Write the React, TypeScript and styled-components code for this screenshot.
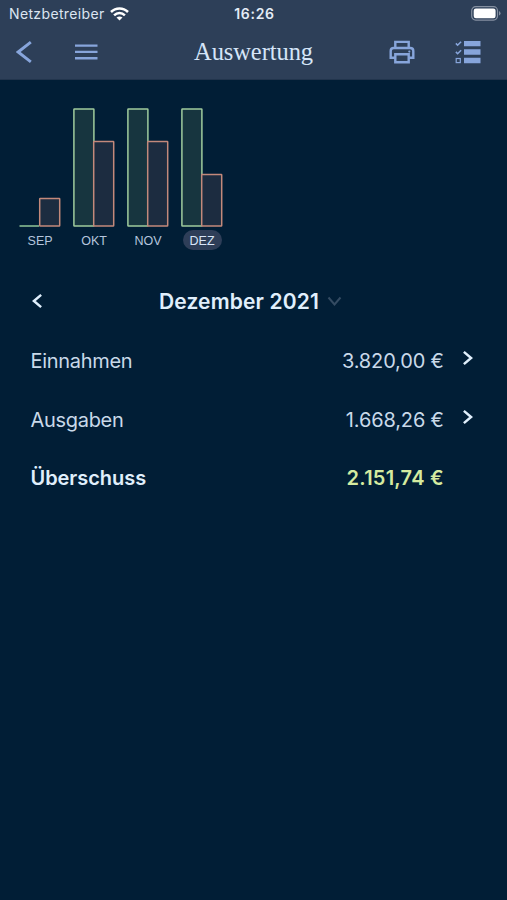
import React from "react";
import styled, { createGlobalStyle } from "styled-components";

const GlobalStyle = createGlobalStyle`
  * { box-sizing: border-box; }
  body { margin: 0; background: #011e36; }
`;

const Screen = styled.div`
  width: 507px;
  height: 900px;
  display: flex;
  flex-direction: column;
  overflow: hidden;
  background: #011e36;
  color: #d9e8f8;
  font-family: Inter, "Liberation Sans", sans-serif;
`;

const Header = styled.header`
  height: 80px;
  background: #2d3f58;
  border-bottom: 1px solid #22354d;
`;

const StatusBar = styled.div`
  height: 27px;
  display: grid;
  grid-template-columns: 1fr auto 1fr;
  align-items: center;
  padding: 0 7px 0 9px;
`;

const Carrier = styled.div`
  display: flex;
  align-items: center;
  gap: 5px;
  font-size: 14px;
  letter-spacing: 0.36px;
  color: #dce5f1;
  white-space: nowrap;
`;

const Clock = styled.div`
  font-size: 14px;
  font-weight: 600;
  letter-spacing: 0.7px;
  color: #e4ecf6;
`;

const Battery = styled.div`
  justify-self: end;
  display: flex;
  margin-right: -2px;
`;

const Toolbar = styled.div`
  height: 50px;
  display: grid;
  grid-template-columns: 1fr auto 1fr;
  align-items: center;
  color: #87a5db;
`;

const Tools = styled.div<{ $end?: boolean }>`
  display: flex;
  align-items: center;
  gap: ${(p) => (p.$end ? 40 : 42)}px;
  justify-content: ${(p) => (p.$end ? "flex-end" : "flex-start")};
  padding: ${(p) => (p.$end ? "0 26px 0 0" : "0 0 0 16px")};
`;

const IconButton = styled.button`
  display: flex;
  padding: 0;
  border: 0;
  background: none;
  color: inherit;
`;

const Title = styled.h1`
  margin: 0;
  font: 400 24.5px/28px "Liberation Serif", serif;
  letter-spacing: -0.08px;
  color: #d5e5f8;
`;

const Chart = styled.section`
  display: grid;
  grid-template-columns: repeat(4, 54px);
  padding: 28px 0 0 19.6px;
`;

const Month = styled.div`
  width: 41px;
  display: flex;
  flex-direction: column;
  align-items: center;
`;

const MonthLabel = styled.span<{ $active?: boolean }>`
  width: 39px;
  height: 20px;
  margin-top: 3px;
  border-radius: 10px;
  background: ${(p) => (p.$active ? "#2e3e58" : "transparent")};
  color: ${(p) => (p.$active ? "#d8e5f7" : "#b5c5dd")};
  font: 400 12.5px/22px "Liberation Sans", sans-serif;
  text-align: center;
`;

const Period = styled.div`
  height: 40px;
  margin-top: 31px;
  display: grid;
  grid-template-columns: 32px 1fr 55px;
  align-items: center;
  padding: 0 15px 0 32px;
`;

const PeriodName = styled.div`
  display: flex;
  align-items: center;
  justify-content: center;
  gap: 8px;
  font-size: 21px;
  font-weight: 600;
  letter-spacing: 0.16px;
  color: #e0effc;
  white-space: nowrap;
`;

const Rows = styled.div`
  margin-top: 11px;
`;

const Row = styled.div<{ $total?: boolean }>`
  height: 58.5px;
  display: grid;
  grid-template-columns: 1fr auto 18px;
  column-gap: 16px;
  align-items: center;
  padding: 0 30px;
  font-size: 20px;
  font-weight: ${(p) => (p.$total ? 600 : 400)};
  color: ${(p) => (p.$total ? "#e0effc" : "#c9d9e9")};
`;

const Label = styled.span<{ $tight?: boolean }>`
  padding-left: 0.5px;
  letter-spacing: ${(p) => (p.$tight ? "-0.3px" : "-0.05px")};
`;

const Amount = styled.span<{ $positive?: boolean }>`
  color: ${(p) => (p.$positive ? "#d5eba0" : "inherit")};
  letter-spacing: ${(p) => (p.$positive ? "0.24px" : "-0.15px")};
  margin-right: -0.8px;
  white-space: nowrap;
`;

const RowArrow = styled.span`
  display: flex;
  justify-content: center;
  padding: 0 1px 6px 0;
`;

const BASE = 117;

const months = [
  { name: "SEP", income: 0, expense: 27.5 },
  { name: "OKT", income: 117, expense: 84.5 },
  { name: "NOV", income: 117, expense: 84.5 },
  { name: "DEZ", income: 117, expense: 51.5, active: true },
];

function Bars({ income, expense }: { income: number; expense: number }) {
  return (
    <svg width="42" height="119" viewBox="0 0 42 119" fill="none" strokeWidth="1.5">
      {income > 0 ? (
        <rect x="0.9" y={BASE + 1 - income} width="20" height={income} rx="0.5" fill="#17353f" stroke="#a0cc9d" />
      ) : (
        <path d={`M0.5 ${BASE + 1}H20`} stroke="#91c798" />
      )}
      <rect x="20.7" y={BASE + 1 - expense} width="20" height={expense} rx="0.5" fill="#1c2c40" stroke="#c3897b" />
    </svg>
  );
}

function Chevron({ dir, color, w, h, stroke }: { dir: "left" | "right" | "down"; color: string; w: number; h: number; stroke: number }) {
  const i = stroke * 0.75;
  const d =
    dir === "left"
      ? `M${w - i} ${i}L${i} ${h / 2}L${w - i} ${h - i}`
      : dir === "right"
        ? `M${i} ${i}L${w - i} ${h / 2}L${i} ${h - i}`
        : `M${i} ${i}L${w / 2} ${h - i}L${w - i} ${i}`;
  return (
    <svg width={w} height={h} viewBox={`0 0 ${w} ${h}`} fill="none">
      <path d={d} stroke={color} strokeWidth={stroke} />
    </svg>
  );
}

function Wifi() {
  return (
    <svg width="19" height="14" viewBox="0 0 19 14" fill="none" stroke="#fff" strokeWidth="2.5">
      <path d="M1 5C5.8 .2 13.2 .2 18 5" />
      <path d="M4.1 8.3C7.2 5.2 11.8 5.2 14.9 8.3" />
      <path d="M6.5 10.6Q9.5 8.2 12.5 10.6L9.5 13.6Z" fill="#fff" stroke="none" />
    </svg>
  );
}

function BatteryIcon() {
  return (
    <svg width="31" height="15" viewBox="0 0 31 15" fill="none">
      <rect x="0.7" y="0.7" width="25.8" height="13.4" rx="4" stroke="#8590a1" strokeWidth="1.2" />
      <rect x="2.7" y="2.5" width="21.9" height="9.8" rx="2.2" fill="#fff" />
      <path d="M28 5v4.6q1.5-.7 1.5-2.3T28 5z" fill="#8590a1" />
    </svg>
  );
}

function Menu() {
  return (
    <svg width="23" height="16" viewBox="0 0 23 16" fill="#87a5db">
      <path d="M0 .5h22.5v2.3H0zM0 6.8h22.5v2.3H0zM0 13.1h22.5v2.3H0z" />
    </svg>
  );
}

function Printer() {
  return (
    <svg width="26" height="24" viewBox="0 0 26 24" fill="none" stroke="#87a5db" strokeWidth="2.4">
      <path d="M6.3 7.8V1.9h13.4v5.9" />
      <path d="M6.3 17.7H1.7V11q0-3 3-3h16.6q3 0 3 3v6.7h-4.6" />
      <path d="M6.3 14.2h13.4v8H6.3z" />
      <circle cx="20.3" cy="11.6" r="1.1" fill="#87a5db" stroke="none" />
    </svg>
  );
}

function Checklist() {
  return (
    <svg width="26" height="24" viewBox="0 0 26 24" fill="none">
      <path d="M9 .9h16.5v5.4H9zM9 9.3h16.5v5.4H9zM9 17.8h16.5v5.4H9z" fill="#87a5db" />
      <path d="M.9 3.4l1.7 1.8 3.5-3.5M.9 11.9l1.7 1.8 3.5-3.5" stroke="#87a5db" strokeWidth="1.6" />
      <rect x="1.2" y="18.5" width="4.1" height="4.1" stroke="#87a5db" strokeWidth="1.2" />
    </svg>
  );
}

export default function App() {
  return (
    <Screen>
      <GlobalStyle />
      <Header>
        <StatusBar>
          <Carrier>
            Netzbetreiber
            <Wifi />
          </Carrier>
          <Clock>16:26</Clock>
          <Battery>
            <BatteryIcon />
          </Battery>
        </StatusBar>
        <Toolbar>
          <Tools>
            <IconButton aria-label="Zurück">
              <Chevron dir="left" color="#87a5db" w={17} h={24} stroke={2.9} />
            </IconButton>
            <IconButton aria-label="Menü">
              <Menu />
            </IconButton>
          </Tools>
          <Title>Auswertung</Title>
          <Tools $end>
            <IconButton aria-label="Drucken">
              <Printer />
            </IconButton>
            <IconButton aria-label="Liste">
              <Checklist />
            </IconButton>
          </Tools>
        </Toolbar>
      </Header>
      <Chart>
        {months.map((m) => (
          <Month key={m.name}>
            <Bars income={m.income} expense={m.expense} />
            <MonthLabel $active={m.active}>{m.name}</MonthLabel>
          </Month>
        ))}
      </Chart>
      <Period>
        <Chevron dir="left" color="#e0effc" w={11} h={16} stroke={2.5} />
        <PeriodName>
          Dezember 2021
          <Chevron dir="down" color="#344b62" w={15} h={10} stroke={2} />
        </PeriodName>
      </Period>
      <Rows>
        <Row>
          <Label $tight>Einnahmen</Label>
          <Amount>3.820,00 €</Amount>
          <RowArrow>
            <Chevron dir="right" color="#e0effc" w={11} h={16} stroke={2.5} />
          </RowArrow>
        </Row>
        <Row>
          <Label $tight>Ausgaben</Label>
          <Amount>1.668,26 €</Amount>
          <RowArrow>
            <Chevron dir="right" color="#e0effc" w={11} h={16} stroke={2.5} />
          </RowArrow>
        </Row>
        <Row $total>
          <Label>Überschuss</Label>
          <Amount $positive>2.151,74 €</Amount>
        </Row>
      </Rows>
    </Screen>
  );
}
